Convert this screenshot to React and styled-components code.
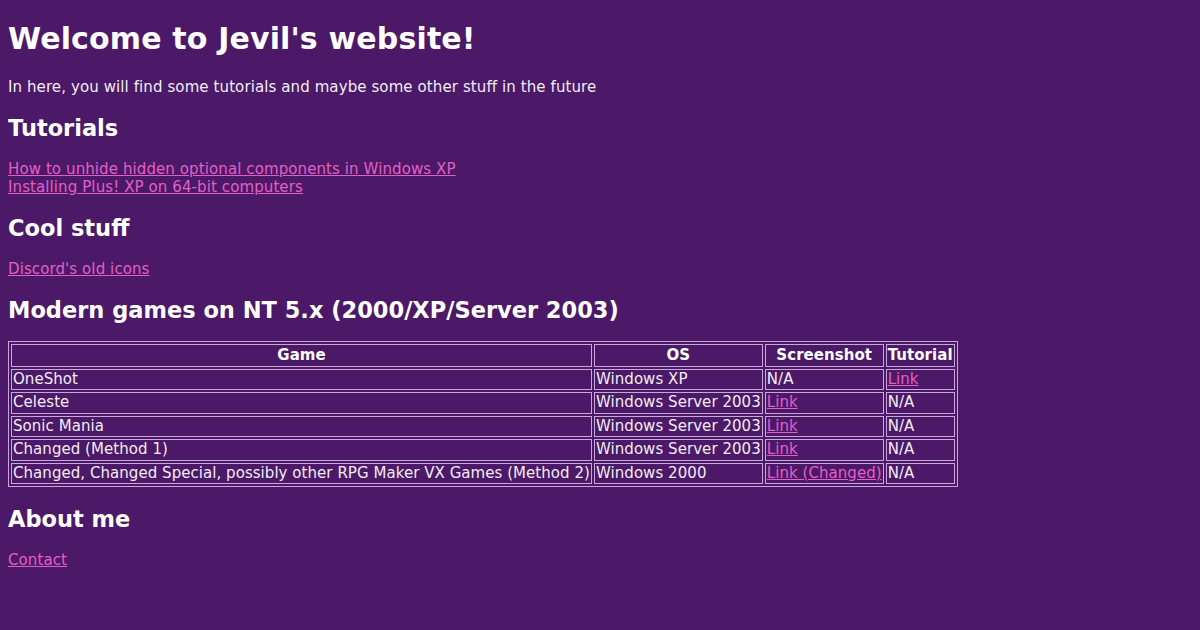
import React from "react";
import styled, { createGlobalStyle } from "styled-components";

const Global = createGlobalStyle`
  html, body { background: #4b1967; }
  body {
    margin: 8px;
    font-family: "DejaVu Sans", Verdana, sans-serif;
    font-size: 15px;
    color: #f2ecf4;
  }
`;

const Title = styled.h1`
  font-size: 30px;
  font-weight: bold;
  color: #ffffff;
  margin: 13px 0 22px;
  letter-spacing: 0.15px;
`;

const Heading = styled.h2`
  font-size: 22.5px;
  font-weight: bold;
  color: #ffffff;
  margin: 19px 0;
`;

const TableHeading = styled(Heading)`
  margin-bottom: 18px;
`;

const Para = styled.p`
  margin: 15px 0;
  letter-spacing: 0.1px;
`;

const Link = styled.a`
  color: #e45fc4;
  text-decoration: underline;
`;

const Table = styled.table`
  border: 1px solid #c8a8d8;
  border-spacing: 2px;
  border-collapse: separate;
  font-size: 15px;
  color: #f2ecf4;
  line-height: 17.5px;
  letter-spacing: 0.05px;
  margin-bottom: 1px;
`;

const Th = styled.th`
  border: 1px solid #c8a8d8;
  padding: 2px 1px 1px;
  font-weight: bold;
  color: #ffffff;
  text-align: center;
`;

const Td = styled.td`
  border: 1px solid #c8a8d8;
  padding: 1px;
  text-align: left;
  white-space: nowrap;
`;

const rows = [
  ["OneShot", "Windows XP", null, "Link"],
  ["Celeste", "Windows Server 2003", "Link", null],
  ["Sonic Mania", "Windows Server 2003", "Link", null],
  ["Changed (Method 1)", "Windows Server 2003", "Link", null],
  [
    "Changed, Changed Special, possibly other RPG Maker VX Games (Method 2)",
    "Windows 2000",
    "Link (Changed)",
    null,
  ],
];

const Cell = ({ value }) => (
  <Td>{value ? <Link href="#">{value}</Link> : "N/A"}</Td>
);

export default function App() {
  return (
    <>
      <Global />
      <Title>Welcome to Jevil's website!</Title>
      <Para>In here, you will find some tutorials and maybe some other stuff in the future</Para>
      <Heading>Tutorials</Heading>
      <Para>
        <Link href="#">How to unhide hidden optional components in Windows XP</Link>
        <br />
        <Link href="#">Installing Plus! XP on 64-bit computers</Link>
      </Para>
      <Heading>Cool stuff</Heading>
      <Para>
        <Link href="#">Discord's old icons</Link>
      </Para>
      <TableHeading>Modern games on NT 5.x (2000/XP/Server 2003)</TableHeading>
      <Table>
        <thead>
          <tr>
            <Th>Game</Th>
            <Th>OS</Th>
            <Th>Screenshot</Th>
            <Th>Tutorial</Th>
          </tr>
        </thead>
        <tbody>
          {rows.map((r) => (
            <tr key={r[0]}>
              <Td>{r[0]}</Td>
              <Td>{r[1]}</Td>
              <Cell value={r[2]} />
              <Cell value={r[3]} />
            </tr>
          ))}
        </tbody>
      </Table>
      <Heading>About me</Heading>
      <Para>
        <Link href="#">Contact</Link>
      </Para>
    </>
  );
}
